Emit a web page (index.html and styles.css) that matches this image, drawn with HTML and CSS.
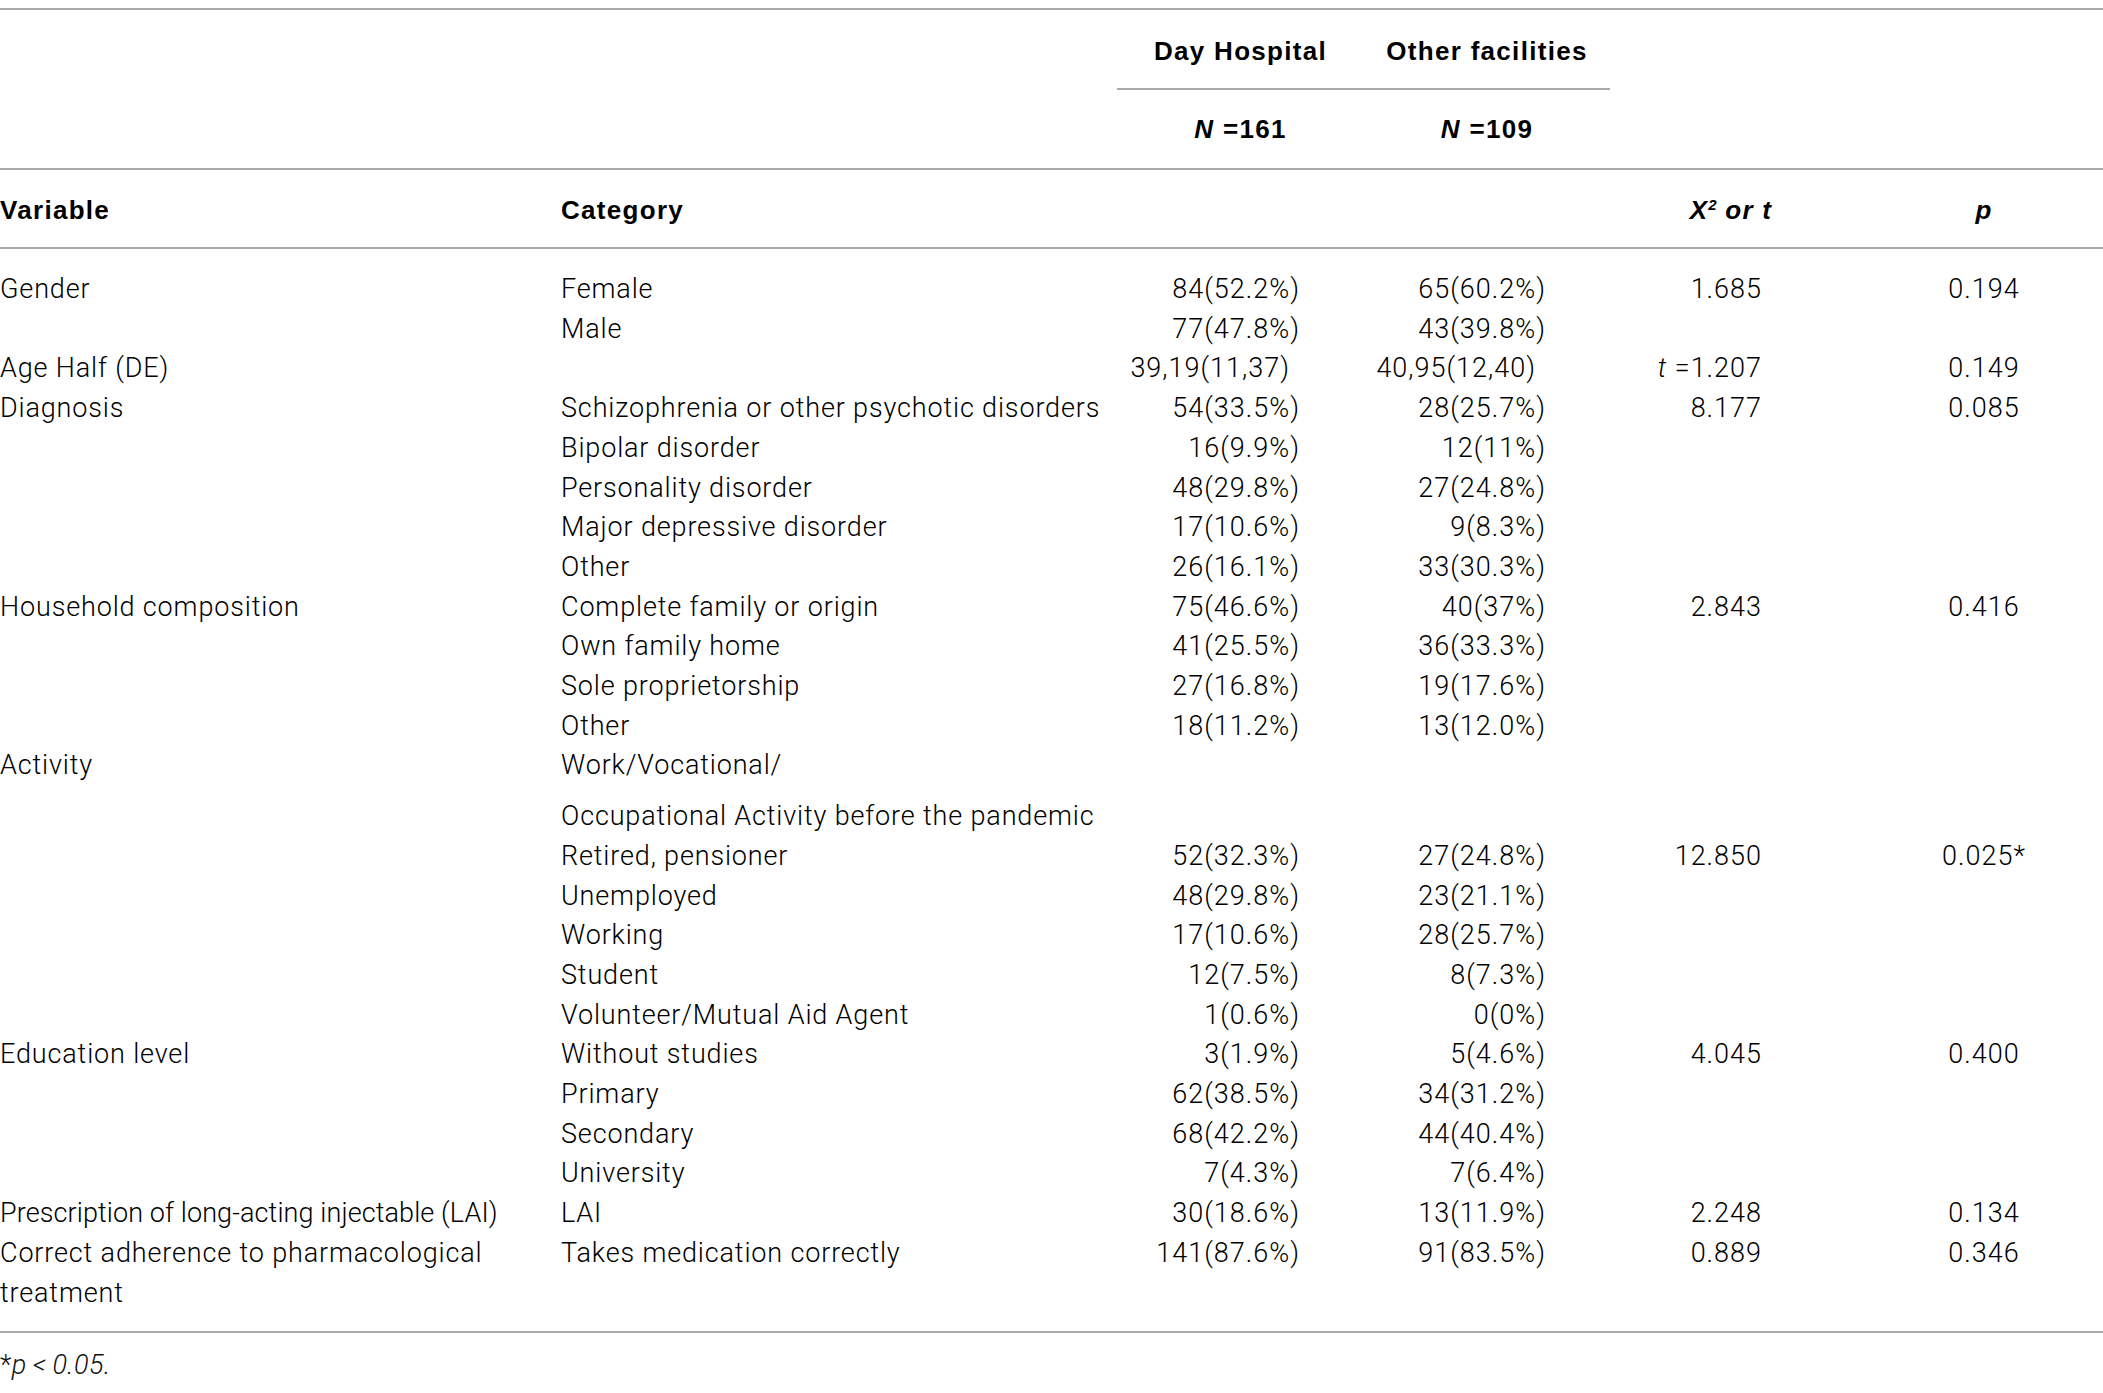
FILE: index.html
```html
<!DOCTYPE html>
<html>
<head>
<meta charset="utf-8">
<link rel="stylesheet" href="styles.css">
</head>
<body>
<table class="tbl">
  <colgroup>
    <col class="c-var"><col class="c-cat"><col class="c-dh"><col class="c-of"><col class="c-x2"><col class="c-p">
  </colgroup>
  <thead>
    <tr class="h1">
      <th class="blank"></th><th class="blank"></th>
      <th class="grp">Day Hospital</th><th class="grp">Other facilities</th>
      <th class="blank"></th><th class="blank"></th>
    </tr>
    <tr class="h2">
      <th></th><th></th>
      <th class="ctr"><i>N</i> =161</th><th class="ctr"><i>N</i> =109</th>
      <th></th><th></th>
    </tr>
    <tr class="h3">
      <th class="left">Variable</th><th class="left">Category</th>
      <th></th><th></th>
      <th class="ctr x2h"><i>X<sup>2</sup> or t</i></th><th class="ctr"><i>p</i></th>
    </tr>
  </thead>
  <tbody>
    <tr class="first"><td>Gender</td><td>Female</td><td class="num">84(52.2%)</td><td class="num">65(60.2%)</td><td class="num stat">1.685</td><td class="pv">0.194</td></tr>
    <tr><td></td><td>Male</td><td class="num">77(47.8%)</td><td class="num">43(39.8%)</td><td></td><td></td></tr>
    <tr><td>Age Half (DE)</td><td></td><td class="num age">39,19(11,37)</td><td class="num age">40,95(12,40)</td><td class="num stat"><i>t</i> =1.207</td><td class="pv">0.149</td></tr>
    <tr><td>Diagnosis</td><td>Schizophrenia or other psychotic disorders</td><td class="num">54(33.5%)</td><td class="num">28(25.7%)</td><td class="num stat">8.177</td><td class="pv">0.085</td></tr>
    <tr><td></td><td>Bipolar disorder</td><td class="num">16(9.9%)</td><td class="num">12(11%)</td><td></td><td></td></tr>
    <tr><td></td><td>Personality disorder</td><td class="num">48(29.8%)</td><td class="num">27(24.8%)</td><td></td><td></td></tr>
    <tr><td></td><td>Major depressive disorder</td><td class="num">17(10.6%)</td><td class="num">9(8.3%)</td><td></td><td></td></tr>
    <tr><td></td><td>Other</td><td class="num">26(16.1%)</td><td class="num">33(30.3%)</td><td></td><td></td></tr>
    <tr><td>Household composition</td><td>Complete family or origin</td><td class="num">75(46.6%)</td><td class="num">40(37%)</td><td class="num stat">2.843</td><td class="pv">0.416</td></tr>
    <tr><td></td><td>Own family home</td><td class="num">41(25.5%)</td><td class="num">36(33.3%)</td><td></td><td></td></tr>
    <tr><td></td><td>Sole proprietorship</td><td class="num">27(16.8%)</td><td class="num">19(17.6%)</td><td></td><td></td></tr>
    <tr><td></td><td>Other</td><td class="num">18(11.2%)</td><td class="num">13(12.0%)</td><td></td><td></td></tr>
    <tr class="gap"><td>Activity</td><td>Work/Vocational/</td><td></td><td></td><td></td><td></td></tr>
    <tr><td></td><td>Occupational Activity before the pandemic</td><td></td><td></td><td></td><td></td></tr>
    <tr><td></td><td>Retired, pensioner</td><td class="num">52(32.3%)</td><td class="num">27(24.8%)</td><td class="num stat">12.850</td><td class="pv">0.025*</td></tr>
    <tr><td></td><td>Unemployed</td><td class="num">48(29.8%)</td><td class="num">23(21.1%)</td><td></td><td></td></tr>
    <tr><td></td><td>Working</td><td class="num">17(10.6%)</td><td class="num">28(25.7%)</td><td></td><td></td></tr>
    <tr><td></td><td>Student</td><td class="num">12(7.5%)</td><td class="num">8(7.3%)</td><td></td><td></td></tr>
    <tr><td></td><td>Volunteer/Mutual Aid Agent</td><td class="num">1(0.6%)</td><td class="num">0(0%)</td><td></td><td></td></tr>
    <tr><td>Education level</td><td>Without studies</td><td class="num">3(1.9%)</td><td class="num">5(4.6%)</td><td class="num stat">4.045</td><td class="pv">0.400</td></tr>
    <tr><td></td><td>Primary</td><td class="num">62(38.5%)</td><td class="num">34(31.2%)</td><td></td><td></td></tr>
    <tr><td></td><td>Secondary</td><td class="num">68(42.2%)</td><td class="num">44(40.4%)</td><td></td><td></td></tr>
    <tr><td></td><td>University</td><td class="num">7(4.3%)</td><td class="num">7(6.4%)</td><td></td><td></td></tr>
    <tr><td class="tight">Prescription of long-acting injectable (LAI)</td><td>LAI</td><td class="num">30(18.6%)</td><td class="num">13(11.9%)</td><td class="num stat">2.248</td><td class="pv">0.134</td></tr>
    <tr class="last"><td>Correct adherence to pharmacological treatment</td><td>Takes medication correctly</td><td class="num">141(87.6%)</td><td class="num">91(83.5%)</td><td class="num stat">0.889</td><td class="pv">0.346</td></tr>
  </tbody>
</table>
<p class="note">*<i>p</i>&#8201;<i>&lt;</i>&#8201;<i>0.05.</i></p>
</body>
</html>
```
FILE: styles.css
```css
html, body {
  margin: 0;
  padding: 0;
  background: #ffffff;
}
body {
  font-family: Roboto, "Liberation Sans", Arial, sans-serif;
  font-weight: 300;
  color: #000000;
}
.tbl {
  margin-top: 8px;
  width: 2103px;
  table-layout: fixed;
  border-collapse: separate;
  border-spacing: 0;
  border-top: 2px solid #a9a9a9;
}
.c-var { width: 561px; }
.c-cat { width: 556px; }
.c-dh { width: 247px; }
.c-of { width: 246px; }
.c-x2 { width: 255px; }
.c-p { width: 238px; }

.tbl th {
  font-family: "Liberation Sans", Arial, sans-serif;
  font-weight: 700;
  font-size: 26px;
  letter-spacing: 1.3px;
  color: #000000;
  padding: 0;
  white-space: nowrap;
  text-align: center;
}
.tbl th.left { text-align: left; }
.h1 th {
  line-height: 78px;
  border-bottom: 2px solid transparent;
}
.h1 th.grp {
  border-bottom-color: #a9a9a9;
  padding-top: 4px;
  line-height: 74px;
}
.h2 th {
  line-height: 78px;
  border-bottom: 2px solid #a9a9a9;
}
.h3 th {
  padding-top: 4px;
  line-height: 73px;
  border-bottom: 2px solid #a9a9a9;
}
.x2h { padding-right: 13px !important; }
.tbl sup {
  font-size: 15px;
  line-height: 0;
  vertical-align: 9px;
  letter-spacing: 0;
}

.tbl td {
  font-size: 27px;
  line-height: 39.7px;
  padding: 0;
  vertical-align: top;
  text-align: left;
  letter-spacing: 0.85px;
}
.tbl td.tight { letter-spacing: 0.1px; }
.tbl td.num {
  text-align: right;
  letter-spacing: 1px;
  white-space: nowrap;
}
.tbl tr td:nth-child(3).num,
.tbl tr td:nth-child(4).num { padding-right: 64px; }
.tbl tr td:nth-child(3).age { padding-right: 74px; }
.tbl tr td:nth-child(4).age { padding-right: 74px; }
.tbl td.stat { padding-right: 103px; }
.tbl td.pv {
  text-align: center;
  letter-spacing: 1px;
}
.tbl tr.first td { padding-top: 21px; }
.tbl tr.gap td { padding-bottom: 11px; }
.tbl tr.last td {
  padding-bottom: 18px;
  border-bottom: 2px solid #a9a9a9;
}
.tbl tr.last td:first-child { padding-right: 20px; }
.note {
  margin: 12px 0 0 0;
  font-size: 27px;
  line-height: 40px;
  letter-spacing: 0.4px;
  color: #111111;
}
```
